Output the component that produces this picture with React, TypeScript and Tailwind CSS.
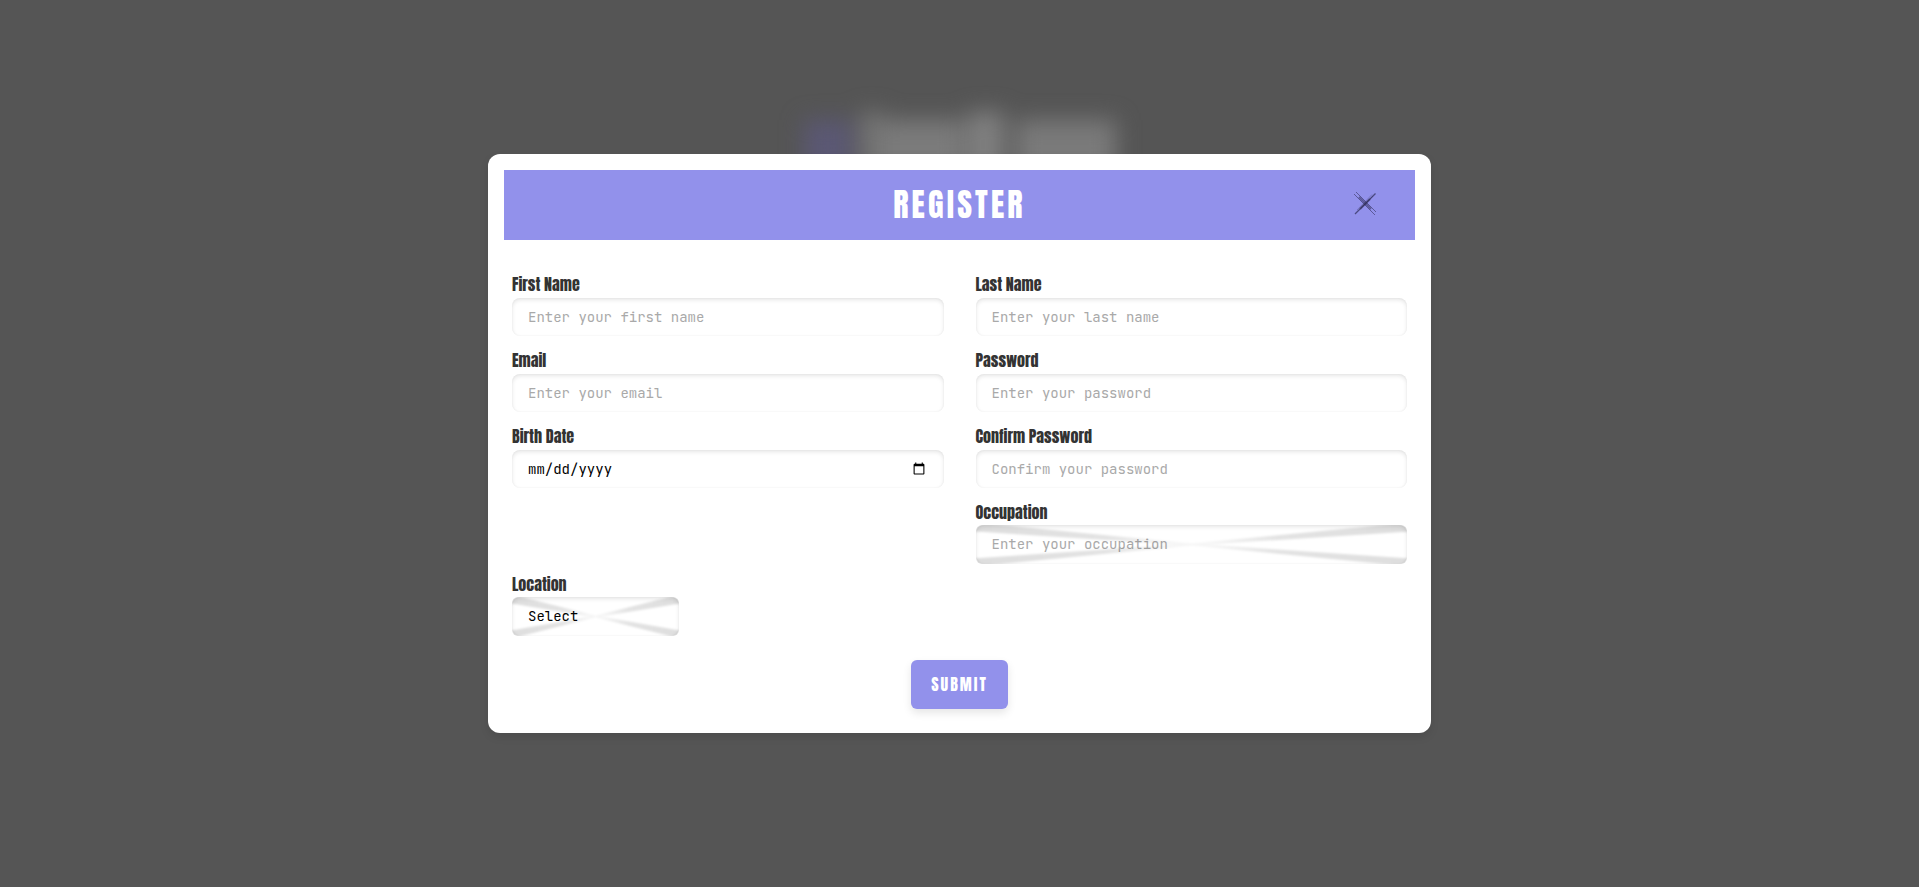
import React from "react";

const anton = "font-['Anton','Roboto_Condensed','DejaVu_Sans_Condensed',sans-serif] font-normal";
const mono = "font-['JetBrains_Mono','DejaVu_Sans_Mono','Liberation_Mono',monospace] text-sm";
const labelText = "block text-base leading-6 text-[#333]";
const fieldBox =
  "block w-full rounded-lg bg-white px-4 text-black placeholder:text-[#a9a9a9] outline-none shadow-[inset_0_2px_4px_rgba(0,0,0,0.1),inset_0_0_2px_rgba(0,0,0,0.06)]";
const dateParts =
  "[&::-webkit-datetime-edit-month-field]:p-0 [&::-webkit-datetime-edit-day-field]:p-0 [&::-webkit-datetime-edit-year-field]:p-0";

type FieldProps = { id: string; label: string; type?: string; placeholder?: string };

function Field({ id, label, type = "text", placeholder }: FieldProps) {
  return (
    <div>
      <label htmlFor={id} className={`${anton} ${labelText} h-[26px]`}>{label}</label>
      <input id={id} type={type} placeholder={placeholder} className={`${mono} ${fieldBox} ${dateParts} h-[38px]`} />
    </div>
  );
}

function Rays({ id }: { id: string }) {
  return (
    <svg viewBox="0 0 100 39" preserveAspectRatio="none" aria-hidden="true" className="pointer-events-none absolute inset-0 h-full w-full rounded-md">
      <defs>
        <linearGradient id={`${id}-ray`} x1="0" x2="100" y1="0" y2="0" gradientUnits="userSpaceOnUse">
          <stop offset="0" stopColor="#000" stopOpacity="0.13" />
          <stop offset="0.3" stopColor="#000" stopOpacity="0.11" />
          <stop offset="0.5" stopColor="#000" stopOpacity="0.02" />
          <stop offset="0.7" stopColor="#000" stopOpacity="0.11" />
          <stop offset="1" stopColor="#000" stopOpacity="0.13" />
        </linearGradient>
        <filter id={`${id}-soft`} x="-10%" y="-10%" width="120%" height="120%">
          <feGaussianBlur stdDeviation="0.2 1" />
        </filter>
      </defs>
      <g fill={`url(#${id}-ray)`} filter={`url(#${id}-soft)`}>
        <path d="M-2 -1H3L50 18.5V20.5L-2 6Z" />
        <path d="M102 -1H97L50 18.5V20.5L102 6Z" />
        <path d="M-2 40H3L50 20.5V18.5L-2 34Z" />
        <path d="M102 40H97L50 20.5V18.5L102 34Z" />
      </g>
    </svg>
  );
}

export default function App() {
  return (
    <div className="relative flex min-h-screen items-center justify-center overflow-hidden bg-[#555]">
      <div aria-hidden="true" className="absolute inset-x-0 top-28 flex h-16 items-end justify-center blur-[11px]">
        <span className="mr-2 h-14 w-12 bg-[#5b5874]" />
        <span className="h-16 w-6 bg-[#747474]" />
        <span className="mr-1 h-14 w-20 bg-[#7b7b7b]" />
        <span className="mr-3 h-16 w-9 bg-[#808080]" />
        <span className="h-14 w-25 bg-[#7a7a7a]" />
      </div>
      <main role="dialog" aria-labelledby="title" className="relative w-full max-w-[943px] rounded-xl bg-white p-4 pb-6 shadow-[0_4px_8px_rgba(0,0,0,0.1)]">
        <header className="relative flex h-[70px] items-center justify-center bg-[#9291eb]">
          <h1 id="title" className={`${anton} text-[32px] leading-10 tracking-widest text-white`}>REGISTER</h1>
          <button type="button" aria-label="Close" className="absolute right-9 top-5 flex size-7 items-center justify-center">
            <svg viewBox="0 0 28 28" className="size-7" fill="none" stroke="#2e2c55">
              <path d="M4 24 24.5 3.5" strokeWidth="1.2" strokeOpacity="0.7" />
              <path d="M3 4 24 25" strokeWidth="1" strokeOpacity="0.55" />
              <path d="M5 2 25 22" strokeWidth="1" strokeOpacity="0.55" />
              <path d="M6 20 21 4.5M10 18 22 6" strokeWidth="0.8" strokeOpacity="0.35" />
              <path d="M8 7 20 19" strokeWidth="1.8" strokeOpacity="0.55" />
              <path d="M9 19 19 9" strokeWidth="2.2" strokeOpacity="0.5" />
            </svg>
          </button>
        </header>
        <form className="px-2 pt-8" onSubmit={(e) => e.preventDefault()}>
          <div className="grid grid-cols-2 gap-x-8 gap-y-3">
            <Field id="first" label="First Name" placeholder="Enter your first name" />
            <Field id="last" label="Last Name" placeholder="Enter your last name" />
            <Field id="email" label="Email" type="email" placeholder="Enter your email" />
            <Field id="password" label="Password" type="password" placeholder="Enter your password" />
            <Field id="birth" label="Birth Date" type="date" />
            <Field id="confirm" label="Confirm Password" type="password" placeholder="Confirm your password" />
            <div className="col-start-2">
              <label htmlFor="occupation" className={`${anton} ${labelText} h-[25px]`}>Occupation</label>
              <div className="relative">
                <input id="occupation" placeholder="Enter your occupation" className={`${mono} ${fieldBox} h-[39px] pb-0.5`} />
                <Rays id="occupation" />
              </div>
            </div>
          </div>
          <div className="mt-2 w-[167px]">
            <label htmlFor="location" className={`${anton} ${labelText} h-[25px]`}>Location</label>
            <div className="relative">
              <select id="location" className={`${mono} ${fieldBox} h-[39px] appearance-none pb-0.5`}><option>Select</option></select>
              <Rays id="location" />
            </div>
          </div>
          <div className="mt-6 flex justify-center">
            <button type="submit" className={`${anton} h-[49px] rounded-md bg-[#9291eb] px-5 pb-0.5 text-base tracking-[2px] text-white shadow-[0_4px_8px_rgba(0,0,0,0.1)]`}>SUBMIT</button>
          </div>
        </form>
      </main>
    </div>
  );
}
